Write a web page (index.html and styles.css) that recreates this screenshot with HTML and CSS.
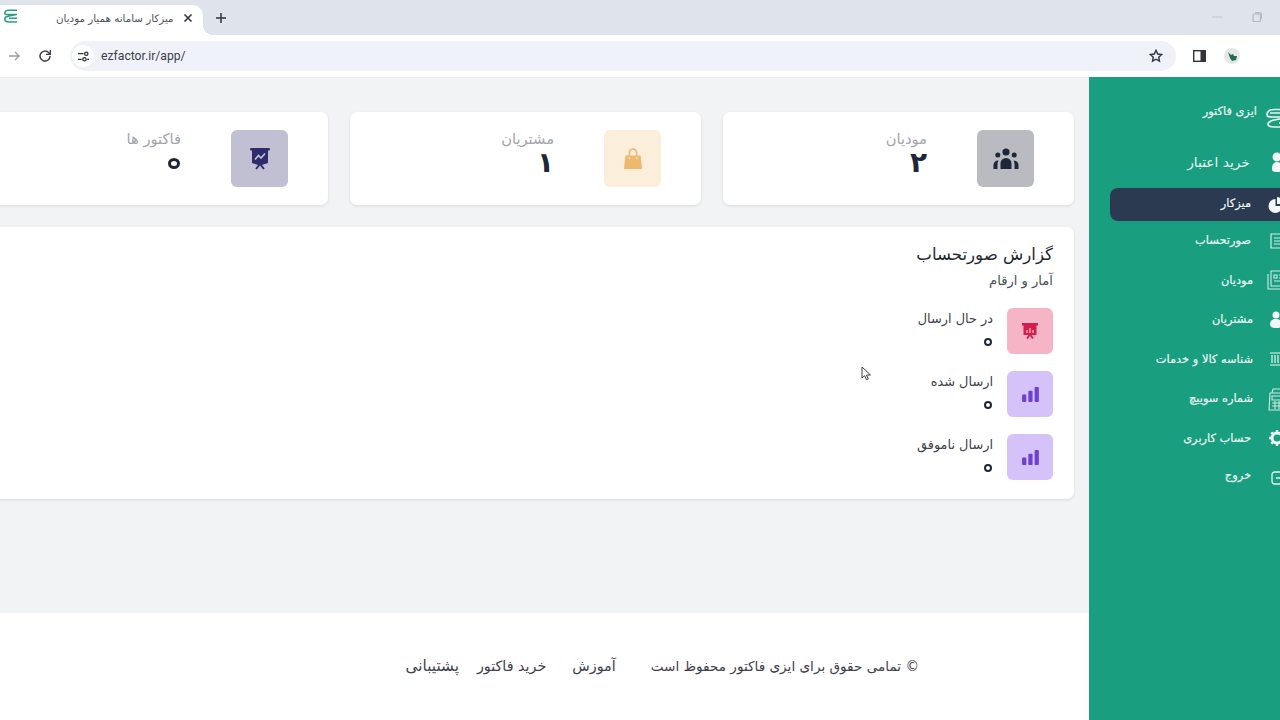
FILE: index.html
```html
<!DOCTYPE html>
<html lang="fa">
<head>
    <meta charset="UTF-8">
    <title>میزکار سامانه همیار مودیان</title>
    <link rel="stylesheet" href="styles.css">
</head>
<body>
    <div class="tabstrip">
        <div class="tab">
            <svg class="favicon" viewBox="0 0 14 14" width="14" height="14" fill="none" stroke="#2f9c86" stroke-width="1.6"><path d="M13 1.200H5C1.500 1.200.8 3 .8 4.200c0 1 1 1.300 3 1.300H13M12.500 5.500L4 7.200C2 7.700.8 8.500.8 10c0 1.800 1.500 3 4 3H13M5 9.200h8"/></svg>
            <span class="tab-title">میزکار سامانه همیار مودیان</span>
            <svg class="tab-close" viewBox="0 0 10 10" width="10" height="10" stroke="#30343c" stroke-width="1.6"><path d="M1.500 1.500l7 7M8.500 1.500l-7 7"/></svg>
        </div>
        <svg class="tab-new" viewBox="0 0 12 12" width="12" height="12" stroke="#30343c" stroke-width="1.500"><path d="M6 1v10M1 6h10"/></svg>
        <div class="window-btns">
            <svg viewBox="0 0 10 10" width="10" height="10" stroke="#c3c7cf" stroke-width="1"><path d="M0 5h10"/></svg>
            <svg viewBox="0 0 10 10" width="10" height="10" fill="none" stroke="#b4b8c0" stroke-width="1.200"><rect x="1" y="2" width="7.500" height="7.500" rx="1.500"/><path d="M3 .7h4.500A2 2 0 0 1 9.500 2.700V7"/></svg>
        </div>
    </div>
    <div class="toolbar">
        <svg class="nav-fwd" viewBox="0 0 12 12" width="12" height="12" fill="none" stroke="#9a9ea6" stroke-width="1.400"><path d="M1 6h10M7 2l4 4-4 4"/></svg>
        <svg class="nav-reload" viewBox="0 0 14 14" width="14" height="14" fill="none" stroke="#3a3e46" stroke-width="1.500"><path d="M12 7a5 5 0 1 1-1.500-3.500L12 5"/><path d="M12.300 1v4.300H8" stroke-width="1.300"/></svg>
        <div class="address">
            <span class="site-btn">
                <svg viewBox="0 0 14 14" width="13" height="13" fill="none" stroke="#30343c" stroke-width="1.400"><path d="M1 4h6M1 10h4"/><circle cx="10" cy="4" r="1.800"/><circle cx="8" cy="10" r="1.800"/><path d="M11 10h2"/></svg>
            </span>
            <span class="url">ezfactor.ir/app/</span>
            <svg class="star" viewBox="0 0 14 14" width="14" height="14" fill="none" stroke="#30343c" stroke-width="1.400"><path d="M7 1.300l1.700 3.700 4 .5-3 2.700.8 4L7 10.200l-3.500 2 .8-4-3-2.700 4-.5z"/></svg>
        </div>
        <svg class="side-panel" viewBox="0 0 13 12" width="13" height="12"><rect x=".7" y=".7" width="11.600" height="10.600" fill="#fff" stroke="#30343c" stroke-width="1.400"/><rect x="7.500" y="1" width="5" height="10" fill="#30343c"/></svg>
        <span class="profile">
            <svg viewBox="0 0 16 16" width="16" height="16"><circle cx="8" cy="8" r="8" fill="#e4e7e5"/><path d="M4 4l3 3 2-1 1 2 3 0-1 4-4 1-2-3z" fill="#1f6b58"/></svg>
        </span>
    </div>

    <div class="app">
        <div class="main">
            <div class="content">
                <div class="stat-row">
                    <div class="stat-card">
                        <div class="stat-icon stat-gray">
                            <svg viewBox="0 0 26 22" width="26" height="22" fill="#1e2739"><circle cx="13" cy="4" r="3.600"/><circle cx="4.800" cy="7" r="2.500"/><circle cx="21.200" cy="7" r="2.500"/><path d="M7.500 21v-5.500a5.500 5.500 0 0 1 11 0V21z"/><path d="M.5 21v-3.500c0-3 2-5 5-5-.600 1-1 2.200-1 3.500v5zM25.500 21v-3.500c0-3-2-5-5-5 .600 1 1 2.200 1 3.500v5z"/></svg>
                        </div>
                        <div class="stat-text">
                            <div class="stat-label">مودیان</div>
                            <div class="stat-value">۲</div>
                        </div>
                    </div>
                    <div class="stat-card">
                        <div class="stat-icon stat-orange">
                            <svg viewBox="0 0 20 24" width="18" height="22"><path d="M1.500 8h17L20 23H0z" fill="#eeb96f"/><path d="M6 9V5a4 4 0 0 1 8 0v4" fill="none" stroke="#eeb96f" stroke-width="1.800"/><circle cx="6" cy="11" r="1" fill="#fbeedb"/><circle cx="14" cy="11" r="1" fill="#fbeedb"/></svg>
                        </div>
                        <div class="stat-text">
                            <div class="stat-label">مشتریان</div>
                            <div class="stat-value">۱</div>
                        </div>
                    </div>
                    <div class="stat-card">
                        <div class="stat-icon stat-indigo">
                            <svg viewBox="0 0 20 22" width="20" height="22"><rect x="0" y="0" width="20" height="2.500" rx="1" fill="#2f2c6e"/><path d="M2 2h16v13l-8 2.500L2 15z" fill="#2f2c6e"/><path d="M5 11.500l3.500-4 2.500 2.500 4-4.500" fill="none" stroke="#c1bfd2" stroke-width="1.700"/><path d="M10 16l-4 5M10 16l4 5" stroke="#2f2c6e" stroke-width="2"/></svg>
                        </div>
                        <div class="stat-text">
                            <div class="stat-label">فاکتور ها</div>
                            <div class="stat-value"><span class="zero zero-big">۰</span></div>
                        </div>
                    </div>
                </div>

                <div class="report-card">
                    <h2 class="report-title">گزارش صورتحساب</h2>
                    <div class="report-sub">آمار و ارقام</div>
                    <div class="report-row">
                        <div class="report-icon report-pink">
                            <svg viewBox="0 0 16 16" width="16" height="16"><rect x="0" y="0" width="16" height="2.500" fill="#d11f4e"/><path d="M1.500 2h13v10h-13z" fill="#d11f4e"/><path d="M5 10V7M8 10V5M11 10V7" stroke="#f5b5c6" stroke-width="1.300"/><path d="M8 11.500l-3 4M8 11.500l3 4" stroke="#d11f4e" stroke-width="1.800"/></svg>
                        </div>
                        <div class="report-text">
                            <div class="report-label">در حال ارسال</div>
                            <div class="report-value"><span class="zero">۰</span></div>
                        </div>
                    </div>
                    <div class="report-row">
                        <div class="report-icon report-purple">
                            <svg viewBox="0 0 18 16" width="17" height="15" fill="#6f3fd0"><rect x="0" y="8" width="4.500" height="8" rx="1"/><rect x="6.700" y="4" width="4.500" height="12" rx="1"/><rect x="13.400" y="0" width="4.500" height="16" rx="1"/></svg>
                        </div>
                        <div class="report-text">
                            <div class="report-label">ارسال شده</div>
                            <div class="report-value"><span class="zero">۰</span></div>
                        </div>
                    </div>
                    <div class="report-row">
                        <div class="report-icon report-purple">
                            <svg viewBox="0 0 18 16" width="17" height="15" fill="#6f3fd0"><rect x="0" y="8" width="4.500" height="8" rx="1"/><rect x="6.700" y="4" width="4.500" height="12" rx="1"/><rect x="13.400" y="0" width="4.500" height="16" rx="1"/></svg>
                        </div>
                        <div class="report-text">
                            <div class="report-label">ارسال ناموفق</div>
                            <div class="report-value"><span class="zero">۰</span></div>
                        </div>
                    </div>
                </div>
            </div>

            <div class="footer">
                <span class="copyright">© تمامی حقوق برای ایزی فاکتور محفوظ است</span>
                <a class="footer-link link-first">آموزش</a>
                <a class="footer-link">خرید فاکتور</a>
                <a class="footer-link link-last">پشتیبانی</a>
            </div>
        </div>

        <div class="sidebar">
            <div class="side-inner">
                <div class="side-logo">
                    <svg class="logo-mark" viewBox="0 0 24 20" width="24" height="20" fill="none" stroke="#e8f5f1" stroke-width="1.700"><path d="M24 1.500H8C3 1.500 1 4 1 6.500S3 9 6 9h18M24 9L8 12c-4 1-6 2-6 4s2 3 6 3h16M13 15h11M4 5h20"/></svg>
                    <span class="logo-text">ایزی فاکتور</span>
                </div>
                <div class="side-item side-credit">
                    <span class="side-icon">
                        <svg viewBox="0 0 24 20" width="24" height="20" fill="#f1f8f6"><circle cx="11" cy="5" r="4.500"/><path d="M6 17c0-5 2-7 5-7s6 2 6 7c0 2-2 3-6 3s-5-1-5-3z"/></svg>
                    </span>
                    <span>خرید اعتبار</span>
                </div>
                <div class="side-item side-active side-tight">
                    <span class="side-icon">
                        <svg viewBox="0 0 24 20" width="24" height="20" fill="#f1f8f6"><path d="M9.500 4a7 7 0 1 0 7 7h-7z"/><path d="M11 2v7h7a7 7 0 0 0-7-7z"/></svg>
                    </span>
                    <span>میزکار</span>
                </div>
                <div class="side-item side-tight">
                    <span class="side-icon">
                        <svg viewBox="0 0 24 20" width="24" height="20" fill="none" stroke="#d3ece5" stroke-width="1.200"><path d="M5 3h14v14H5zM8 7h9M8 10h9M8 13h9"/></svg>
                    </span>
                    <span>صورتحساب</span>
                </div>
                <div class="side-item">
                    <span class="side-icon">
                        <svg viewBox="0 0 24 20" width="24" height="20" fill="none" stroke="#d3ece5" stroke-width="1.100"><path d="M5 1h16v15H5zM2 4v15h16M8 5h3v3H8zM13 5h5M13 8h5M8 11h10"/></svg>
                    </span>
                    <span>مودیان</span>
                </div>
                <div class="side-item">
                    <span class="side-icon">
                        <svg viewBox="0 0 24 20" width="24" height="20" fill="#f1f8f6"><circle cx="10" cy="5" r="3.500"/><path d="M4 14c0-3 2-5 6-5s6 2 6 5-2 4-6 4-6-1-6-4z"/><circle cx="19" cy="7" r="3"/><path d="M15 11h8v6h-6z"/></svg>
                    </span>
                    <span>مشتریان</span>
                </div>
                <div class="side-item">
                    <span class="side-icon">
                        <svg viewBox="0 0 24 20" width="24" height="20" fill="none" stroke="#e8f5f1" stroke-width="1.200"><path d="M4 4h20M4 16h20M6 6v8M9 6v8M12 6v8M15 6v8M18 6v8"/></svg>
                    </span>
                    <span>شناسه کالا و خدمات</span>
                </div>
                <div class="side-item">
                    <span class="side-icon">
                        <svg viewBox="0 0 24 24" width="24" height="24" fill="none" stroke="#cfe9e2" stroke-width="1.100"><path d="M4 6h14l1 17H3zM6 6l1-4h8l1 4M6 9h10v4H6zM6 16h10M6 19h10M9 14v8M13 14v8"/></svg>
                    </span>
                    <span>شماره سوییچ</span>
                </div>
                <div class="side-item side-tight">
                    <span class="side-icon">
                        <svg viewBox="0 0 24 20" width="24" height="20"><circle cx="11" cy="10" r="5" fill="none" stroke="#f1f8f6" stroke-width="3"/><path d="M11 2v3M11 15v3M3 10h3M16 10h3M5.300 4.300l2.200 2.200M14.500 13.500l2.200 2.200M5.300 15.700l2.200-2.200M14.500 6.500l2.200-2.200" stroke="#f1f8f6" stroke-width="2.500"/></svg>
                    </span>
                    <span>حساب کاربری</span>
                </div>
                <div class="side-item side-tight side-last">
                    <span class="side-icon">
                        <svg viewBox="0 0 24 20" width="24" height="20" fill="none" stroke="#e8f5f1" stroke-width="1.300"><path d="M15 4H9a3 3 0 0 0-3 3v6a3 3 0 0 0 3 3h6M10 10h10"/></svg>
                    </span>
                    <span>خروج</span>
                </div>
            </div>
        </div>
    </div>

    <svg class="cursor" viewBox="0 0 11 15" width="11" height="15"><path d="M1 1v11l2.700-2.300 1.800 4 1.800-.8-1.800-3.900H9.500z" fill="#fff" stroke="#3a3e46" stroke-width="1"/></svg>
</body>
</html>
```

FILE: styles.css
```css
* {
    box-sizing: border-box;
}
body {
    margin: 0;
    width: 1280px;
    height: 720px;
    overflow: hidden;
    position: relative;
    font-family: "DejaVu Sans", sans-serif;
    background: #fff;
    color: #2a2f3a;
}

/* browser chrome */
.tabstrip {
    height: 35px;
    background: #dfe3eb;
    display: flex;
    align-items: flex-end;
}
.tab {
    position: relative;
    width: 203px;
    height: 30px;
    background: #fff;
    border-radius: 0 10px 0 0;
    display: flex;
    align-items: center;
    padding: 0 10px 4px 4px;
}
.tab::after {
    content: "";
    position: absolute;
    left: 100%;
    bottom: 0;
    width: 10px;
    height: 10px;
    background: radial-gradient(circle at 100% 0, transparent 10px, #fff 10px);
}
.favicon {
    margin-bottom: 4px;
}
.tab-title {
    direction: rtl;
    font-size: 10.3px;
    color: #50545c;
    margin-left: 38px;
    white-space: nowrap;
}
.tab-close {
    margin-left: auto;
}
.tab-new {
    margin: 0 0 11px 12px;
}
.window-btns {
    margin: 0 18px 13px auto;
    display: flex;
    gap: 30px;
}
.toolbar {
    height: 42px;
    background: #fff;
    display: flex;
    align-items: center;
    padding-left: 8px;
}
.nav-fwd {
    flex: none;
}
.nav-reload {
    flex: none;
    margin-left: 18px;
}
.address {
    width: 1106px;
    height: 30px;
    margin-left: 18px;
    background: #eff2f9;
    border-radius: 15px;
    display: flex;
    align-items: center;
    padding: 0 13px 0 2px;
}
.site-btn {
    width: 22px;
    height: 22px;
    background: #fff;
    border-radius: 50%;
    display: flex;
    align-items: center;
    justify-content: center;
}
.url {
    font-family: Roboto, sans-serif;
    font-size: 12.2px;
    color: #3c4048;
    margin-left: 7px;
}
.star {
    margin-left: auto;
}
.side-panel {
    flex: none;
    margin-left: 17px;
}
.profile {
    display: flex;
    margin-left: 18px;
}

/* page */
.app {
    height: 643px;
    display: flex;
}
.main {
    width: 1089px;
    flex: none;
    overflow: hidden;
    display: flex;
    flex-direction: column;
}
.content {
    height: 536px;
    background: #f2f3f5;
    border-top: 1px solid #eceef0;
    padding: 34px 15px 0 0;
    direction: rtl;
}
.stat-row {
    display: flex;
    gap: 22px;
}
.stat-card {
    width: 351px;
    height: 93px;
    flex: none;
    background: #fff;
    border-radius: 7px;
    box-shadow: 0 1px 3px rgba(0,0,0,0.1);
    display: flex;
    align-items: center;
    padding-right: 40px;
}
.stat-icon {
    width: 57px;
    height: 57px;
    border-radius: 6px;
    display: flex;
    align-items: center;
    justify-content: center;
}
.stat-gray {
    background: #b9bbc0;
}
.stat-orange {
    background: #fbeedb;
}
.stat-indigo {
    background: #c1bfd2;
}
.stat-text {
    margin: 0 50px 10px 0;
}
.stat-label {
    font-size: 14.7px;
    line-height: 18px;
    color: #a3a4aa;
}
.stat-value {
    font-size: 28px;
    line-height: 30px;
    font-weight: 700;
    color: #1e2739;
}
.zero {
    display: inline-block;
    width: 8px;
    height: 8px;
    margin-right: 1px;
    border: 2px solid #1e2739;
    border-radius: 50%;
    overflow: hidden;
    font-size: 4px;
    line-height: 4px;
    color: transparent;
    vertical-align: middle;
}
.zero-big {
    width: 12px;
    height: 11px;
    border-width: 3.5px;
}
.report-card {
    width: 1200px;
    height: 272px;
    margin-top: 22px;
    background: #fff;
    border-radius: 7px;
    box-shadow: 0 1px 3px rgba(0,0,0,0.1);
    padding: 16px 21px 0 0;
}
.report-title {
    margin: 0;
    font-size: 16.6px;
    line-height: 24px;
    font-weight: 400;
    color: #23272f;
}
.report-sub {
    font-size: 13.1px;
    line-height: 20px;
    margin-top: 4px;
    color: #4a4e56;
}
.report-row {
    display: flex;
    align-items: center;
    height: 46px;
    margin-top: 17px;
}
.report-icon {
    width: 46px;
    height: 46px;
    border-radius: 6px;
    display: flex;
    align-items: center;
    justify-content: center;
}
.report-pink {
    background: #f5b5c6;
}
.report-purple {
    background: #d4c2f8;
}
.report-text {
    margin-right: 14px;
}
.report-label {
    font-size: 12.9px;
    line-height: 20px;
    color: #3d4149;
}
.report-value {
    line-height: 24px;
    margin-top: 1px;
}
.footer {
    flex: 1;
    background: #fff;
    direction: rtl;
    display: flex;
    align-items: center;
    padding: 0 170px 2px 0;
    font-size: 13.6px;
    color: #3d4149;
}
.footer-link {
    margin-right: 26px;
    font-size: 14.3px;
}
.link-first {
    margin-right: 35px;
}
.link-last {
    margin-right: 18px;
    font-size: 15.3px;
}

/* sidebar, runs past the window edge */
.sidebar {
    width: 191px;
    flex: none;
    background: #199e7f;
    overflow: hidden;
}
.side-inner {
    width: 211px;
    direction: rtl;
    padding-top: 26px;
    color: #eaf6f3;
    font-size: 11.4px;
    -webkit-text-stroke: 0.2px #eaf6f3;
}
.side-logo {
    display: flex;
    align-items: flex-start;
    height: 44px;
    padding-right: 10px;
}
.logo-mark {
    margin-top: 5px;
}
.logo-text {
    margin: 1px 9px 0 0;
    line-height: 14px;
}
.side-item {
    height: 39.5px;
    display: flex;
    align-items: center;
    padding-right: 10px;
    white-space: nowrap;
}
.side-item span:last-child {
    margin-bottom: 1px;
}
.side-icon {
    width: 24px;
    display: flex;
    margin-left: 13px;
}
.side-tight .side-icon {
    margin-left: 15px;
}
.side-credit {
    height: 30px;
    font-size: 13.8px;
    -webkit-text-stroke: 0;
    margin-bottom: 11px;
}
.side-credit .side-icon {
    margin-left: 16px;
}
.side-active {
    height: 33px;
    width: 190px;
    background: #2b3a50;
    border-radius: 8px;
}
.side-active span:last-child {
    margin-bottom: 3px;
}
.side-last span:last-child {
    margin-bottom: 5px;
}

.cursor {
    position: absolute;
    left: 861px;
    top: 366px;
}
```
